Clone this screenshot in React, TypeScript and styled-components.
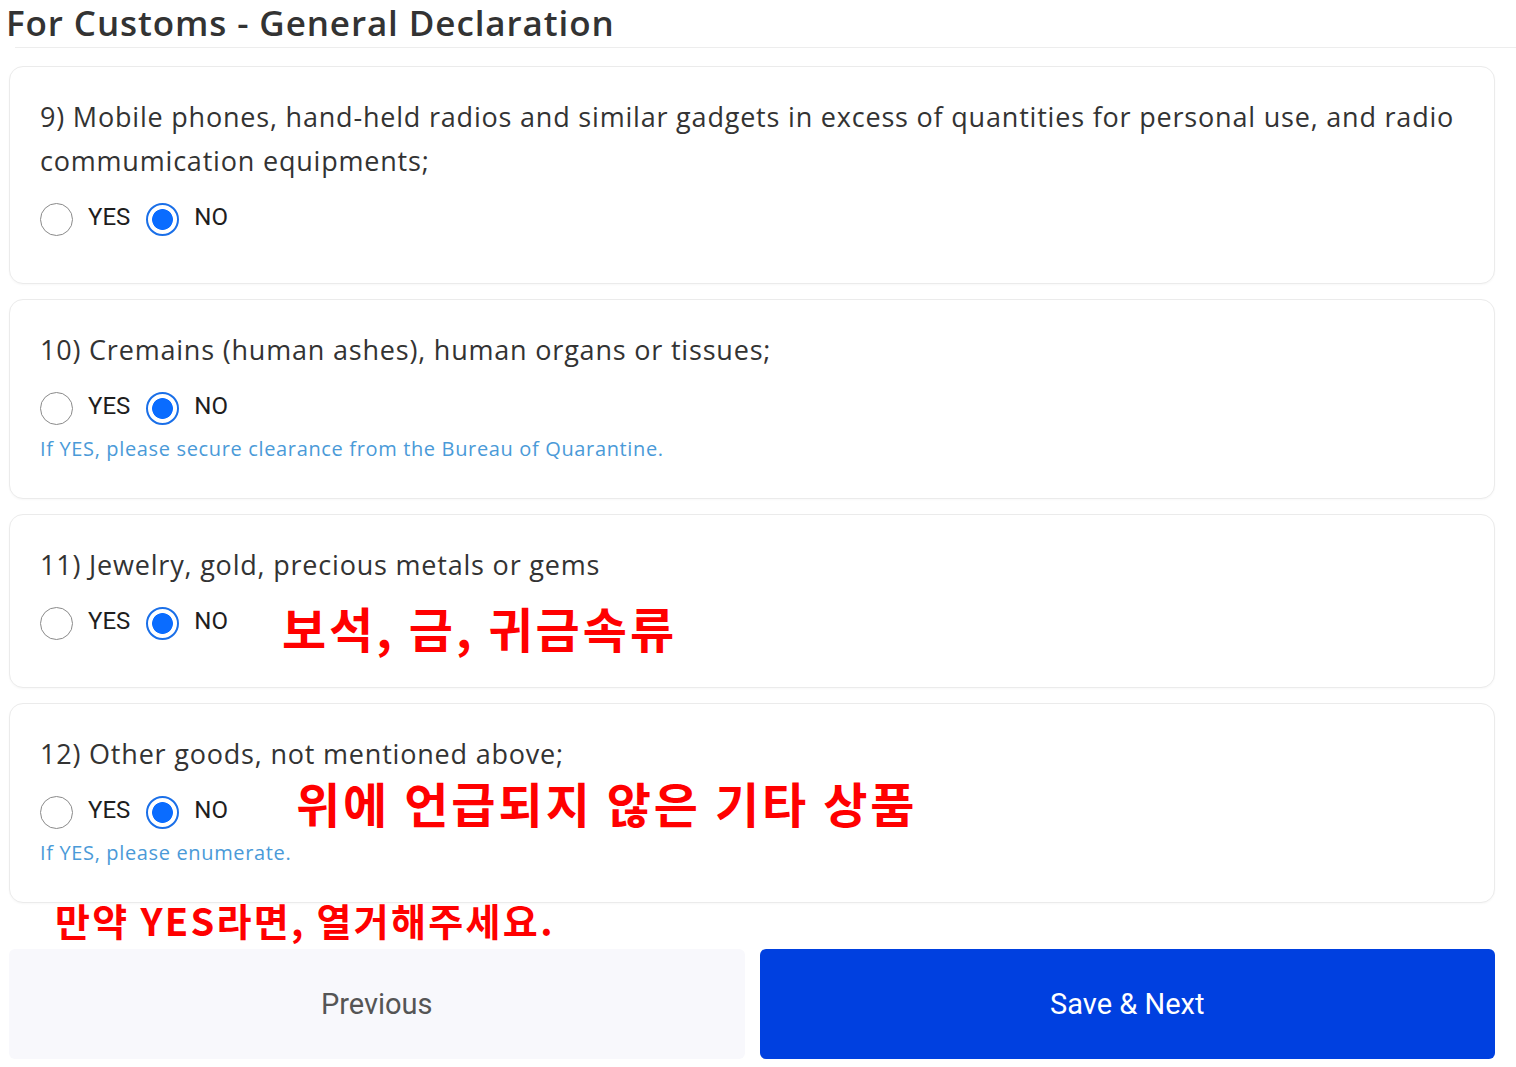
import React from 'react';
import styled, { createGlobalStyle } from 'styled-components';

const GlobalStyle = createGlobalStyle`
  body {
    margin: 0;
    background: #ffffff;
    font-family: "Open Sans", "Noto Sans", sans-serif;
  }
`;

interface Question {
  id: number;
  text: string;
  hint?: string;
  note?: string;
  noteGap?: number;
  noteTop?: number;
}

const questions: Question[] = [
  {
    id: 9,
    text: '9) Mobile phones, hand-held radios and similar gadgets in excess of quantities for personal use, and radio commumication equipments;',
  },
  {
    id: 10,
    text: '10) Cremains (human ashes), human organs or tissues;',
    hint: 'If YES, please secure clearance from the Bureau of Quarantine.',
  },
  {
    id: 11,
    text: '11) Jewelry, gold, precious metals or gems',
    note: '보석, 금, 귀금속류',
    noteGap: 38,
    noteTop: 4,
  },
  {
    id: 12,
    text: '12) Other goods, not mentioned above;',
    hint: 'If YES, please enumerate.',
    note: '위에 언급되지 않은 기타 상품',
    noteGap: 52,
    noteTop: -10,
  },
];

const App: React.FC = () => {
  return (
    <Page>
      <GlobalStyle />
      <Header>
        <Title>For Customs - General Declaration</Title>
      </Header>

      <CardList>
        {questions.map((q) => (
          <Card key={q.id}>
            <QuestionText>{q.text}</QuestionText>
            <RadioRow>
              <RadioOption>
                <Radio />
                <RadioLabel>YES</RadioLabel>
              </RadioOption>
              <RadioOption>
                <Radio checked />
                <RadioLabel>NO</RadioLabel>
              </RadioOption>
              {q.note && (
                <RedNote gap={q.noteGap || 40} shift={q.noteTop || 0}>
                  {q.note}
                </RedNote>
              )}
            </RadioRow>
            {q.hint && <Hint>{q.hint}</Hint>}
          </Card>
        ))}
      </CardList>

      <BottomNote>만약 YES라면, 열거해주세요.</BottomNote>

      <Buttons>
        <Button>Previous</Button>
        <Button primary>Save &amp; Next</Button>
      </Buttons>
    </Page>
  );
};

export default App;

const Page = styled.div`
  width: 1516px;
  height: 1067px;
  overflow: hidden;
  box-sizing: border-box;
  padding-top: 4px;
`;

const Header = styled.div`
  margin-left: 15px;
  height: 43px;
  border-bottom: 1px solid #ededed;
`;

const Title = styled.h1`
  margin: 0 0 0 -9px;
  font-family: "Open Sans", sans-serif;
  font-weight: 600;
  font-size: 35px;
  line-height: 38px;
  letter-spacing: 0.9px;
  color: #333333;
`;

const CardList = styled.div`
  display: flex;
  flex-direction: column;
  gap: 15px;
  margin: 18px 21px 0 9px;
`;

const Card = styled.div`
  background: #ffffff;
  border: 1px solid #ebebeb;
  border-radius: 14px;
  padding: 28px 30px 36px 30px;
  box-shadow: 0 1px 2px rgba(0, 0, 0, 0.03);
`;

const QuestionText = styled.div`
  font-family: "Open Sans", sans-serif;
  font-size: 27px;
  line-height: 44px;
  letter-spacing: 0.8px;
  color: #333333;
  margin-bottom: 18px;
`;

const RadioRow = styled.div`
  display: flex;
  align-items: center;
  height: 36px;
  margin-bottom: 10px;
`;

const RadioOption = styled.label`
  display: flex;
  align-items: center;
  gap: 15px;
  margin-right: 16px;
`;

const Radio = styled.span<{ checked?: boolean }>`
  width: 33px;
  height: 33px;
  box-sizing: border-box;
  border-radius: 50%;
  border: ${(p) => (p.checked ? '2px solid #1a6fe8' : '1.5px solid #8a8a8a')};
  background: ${(p) =>
    p.checked
      ? 'radial-gradient(circle, #0a6cff 0, #0a6cff 10px, #ffffff 10.8px)'
      : '#ffffff'};
`;

const RadioLabel = styled.span`
  font-family: Roboto, "Liberation Sans", sans-serif;
  font-size: 24px;
  color: #1e1e1e;
  position: relative;
  top: -2px;
`;

const RedNote = styled.span<{ gap: number; shift: number }>`
  margin-left: ${(p) => p.gap}px;
  font-family: "Noto Sans CJK KR", sans-serif;
  font-weight: 700;
  font-size: 48px;
  line-height: 36px;
  letter-spacing: 3px;
  color: #ff0000;
  position: relative;
  top: ${(p) => p.shift}px;
`;

const Hint = styled.div`
  margin-top: 9px;
  font-family: "Open Sans", sans-serif;
  font-size: 20px;
  line-height: 26px;
  letter-spacing: 0.65px;
  color: #4a9ad8;
`;

const BottomNote = styled.div`
  margin: -6px 0 0 55px;
  height: 52px;
  font-family: "Noto Sans CJK KR", sans-serif;
  font-weight: 700;
  font-size: 38px;
  line-height: 46px;
  letter-spacing: 2.3px;
  color: #ff0000;
`;

const Buttons = styled.div`
  display: grid;
  grid-template-columns: 1fr 1fr;
  gap: 15px;
  margin: 0 21px 0 9px;
`;

const Button = styled.button<{ primary?: boolean }>`
  height: 110px;
  border: none;
  border-radius: 6px;
  font-family: Roboto, "Liberation Sans", sans-serif;
  font-size: 29px;
  color: ${(p) => (p.primary ? '#ffffff' : '#555555')};
  background: ${(p) => (p.primary ? '#0040e0' : '#f8f8fc')};
  cursor: pointer;
`;
